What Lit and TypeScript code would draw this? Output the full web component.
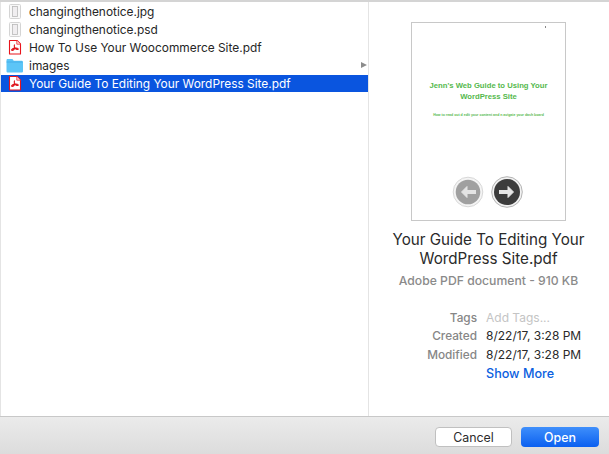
import { LitElement, html, css, svg } from "lit";
import { customElement } from "lit/decorators.js";

const pdfIcon = svg`<svg width="14" height="16" viewBox="0 0 14 16"><path d="M1.500 1.500h7.500l3.500 3.500v10h-11z" fill="#fff" stroke="#e8141c" stroke-width="1.100" stroke-linejoin="round"/><path d="M8.800 1.500v3.700h3.700" fill="#fdd" stroke="#e8141c" stroke-width=".7"/><path d="M7 5.800c-1 0-.9 1.900 0 3.300-.8 1.200-2.200 2.700-3.200 2.200-.8-.5.700-2 3.200-2.200 1.700-.2 3.500.3 3.300 1.100-.2.800-2.300.2-3.300-1.100-.9-1.400-1-3.300 0-3.300z" fill="none" stroke="#e0141c" stroke-width="1.100"/></svg>`;
const docIcon = svg`<svg width="14" height="16" viewBox="0 0 14 16"><rect x="1.500" y="1.500" width="11" height="14" rx="1" fill="#f8f8f8" stroke="#d4d4d4"/><rect x="4.500" y="3.500" width="5" height="10" fill="#f0eef0" stroke="#b8b8b8" stroke-width=".8"/></svg>`;
const folderIcon = svg`<svg width="17" height="15" viewBox="0 0 17 15"><path d="M.5 2.300c0-.8.500-1.300 1.300-1.300h4c.7 0 1 .3 1.400 1l.5.7h7.900c.7 0 1.400.6 1.400 1.400v9.100c0 .8-.6 1.300-1.400 1.300H1.900c-.8 0-1.400-.5-1.400-1.300z" fill="#5cc5f7"/><path d="M.5 4h16" stroke="#3fa8e6" stroke-width=".8"/></svg>`;

const rows = [
  { name: "changingthenotice.jpg", icon: docIcon },
  { name: "changingthenotice.psd", icon: docIcon },
  { name: "How To Use Your Woocommerce Site.pdf", icon: pdfIcon },
  { name: "images", icon: folderIcon, folder: true },
  { name: "Your Guide To Editing Your WordPress Site.pdf", icon: pdfIcon, selected: true },
];

@customElement("app-root")
export class AppRoot extends LitElement {
  static styles = css`
    :host { display: block; width: 609px; height: 454px; overflow: hidden; font-family: Inter, "Liberation Sans", sans-serif; color: #262626; background: #fff; }
    .window { height: 454px; display: flex; flex-direction: column; }
    .main { height: 414px; display: flex; border-top: 2px solid #d4d4d4; }
    .list { flex: none; width: 369px; box-sizing: border-box; border-left: 1px solid #e4e4e4; border-right: 1px solid #e4e4e4; }
    .row { height: 18px; display: flex; align-items: center; font-size: 11.900px; position: relative; }
    .row.selected { background: #0a55df; background-clip: padding-box; border-top: 1px solid transparent; box-sizing: border-box; color: #fff; padding-bottom: 1px; }
    .ic { width: 28px; flex: none; display: flex; justify-content: center; padding-right: 1px; box-sizing: border-box; }
    .ic svg { display: block; }
    .arrow { position: absolute; right: 1px; top: 6px; width: 0; height: 0; border-left: 6px solid #8c8c8c; border-top: 3.500px solid transparent; border-bottom: 3.500px solid transparent; }
    .detail { flex: 1; min-width: 0; display: flex; flex-direction: column; align-items: center; padding: 20px 1px 0 0; }
    .thumb { flex: none; width: 155px; height: 199px; box-sizing: border-box; border: 1px solid #c8c8c8; display: flex; flex-direction: column; align-items: center; position: relative; color: #55b94d; }
    .tick { position: absolute; right: 19px; top: 3px; width: 1px; height: 2px; background: #888; }
    .t1 { margin-top: 58px; font: bold 7.700px/10.500px "Liberation Sans", sans-serif; text-align: center; width: 130px; }
    .t2 { margin-top: 11px; font: bold 3.500px/5px "Liberation Sans", sans-serif; text-align: center; white-space: nowrap; }
    .navs { position: absolute; left: 40px; top: 153px; display: flex; gap: 7px; }
    .title { margin-top: 9px; font-size: 15.200px; line-height: 19.400px; text-align: center; width: 220px; color: #2a2a2a; }
    .sub { margin-top: 4px; font-size: 12.200px; line-height: 15px; font-weight: 500; color: #8a8a8a; }
    .meta { align-self: flex-start; margin-top: 21px; display: grid; grid-template-columns: 108px auto; column-gap: 9px; align-items: baseline; font-size: 12px; line-height: 17.500px; }
    .meta .k { text-align: right; color: #868686; font-weight: 500; font-size: 11.800px; }
    .meta .v { color: #2a2a2a; }
    .meta .ph { color: #c4c4c4; }
    .more { grid-column: 2; color: #0a60e0; font-size: 12.600px; font-weight: 500; margin-top: 1px; }
    .bar { flex: 1; border-top: 1px solid #c8c8c8; background: linear-gradient(#ebebeb, #dcdcdc); display: flex; justify-content: flex-end; align-items: center; gap: 9px; padding: 3px 10px 0 0; }
    button { font: 400 12.400px Inter, "Liberation Sans", sans-serif; height: 20px; border-radius: 4px; padding: 0; box-sizing: border-box; }
    .cancel { width: 77px; background: #fff; border: 1px solid #c0c0c0; color: #2b2b2b; }
    .open { width: 78px; border: none; color: #fff; background: linear-gradient(#3f8ffb, #0b60f0); font-weight: 500; }
  `;
  render() {
    return html`<div class="window">
      <div class="main">
        <div class="list">
          ${rows.map(r => html`<div class="row ${r.selected ? "selected" : ""}"><span class="ic">${r.icon}</span><span>${r.name}</span>${r.folder ? html`<span class="arrow"></span>` : ""}</div>`)}
        </div>
        <div class="detail">
          <div class="thumb">
            <span class="tick"></span>
            <div class="t1">Jenn's Web Guide to Using Your WordPress Site</div>
            <div class="t2">How to read out d edit your content and n avigate your dash board</div>
            <div class="navs">
              <svg width="32" height="32" viewBox="0 0 32 32"><circle cx="16" cy="16" r="14.800" fill="#f4f4f4" stroke="#d8d8d8"/><circle cx="16" cy="16" r="12.300" fill="#a0a0a0"/><path d="M15 10.500L9.500 16L15 21.500Z" fill="#e4e4e4" stroke="#e4e4e4" stroke-width="1"/><rect x="14" y="14" width="10" height="4" fill="#e4e4e4"/></svg>
              <svg width="32" height="32" viewBox="0 0 32 32"><circle cx="16" cy="16" r="15.300" fill="#f2f2f2" stroke="#b4b4b4"/><circle cx="16" cy="16" r="13" fill="#3c3c3c"/><path d="M17 10.500L22.500 16L17 21.500Z" fill="#e6e6e6" stroke="#e6e6e6" stroke-width="1"/><rect x="8" y="14" width="10" height="4" fill="#e6e6e6"/></svg>
            </div>
          </div>
          <div class="title">Your Guide To Editing Your WordPress Site.pdf</div>
          <div class="sub">Adobe PDF document - 910 KB</div>
          <div class="meta">
            <span class="k">Tags</span><span class="ph">Add Tags...</span>
            <span class="k">Created</span><span class="v">8/22/17, 3:28 PM</span>
            <span class="k">Modified</span><span class="v">8/22/17, 3:28 PM</span>
            <span class="more">Show More</span>
          </div>
        </div>
      </div>
      <div class="bar"><button class="cancel">Cancel</button><button class="open">Open</button></div>
    </div>`;
  }
}
